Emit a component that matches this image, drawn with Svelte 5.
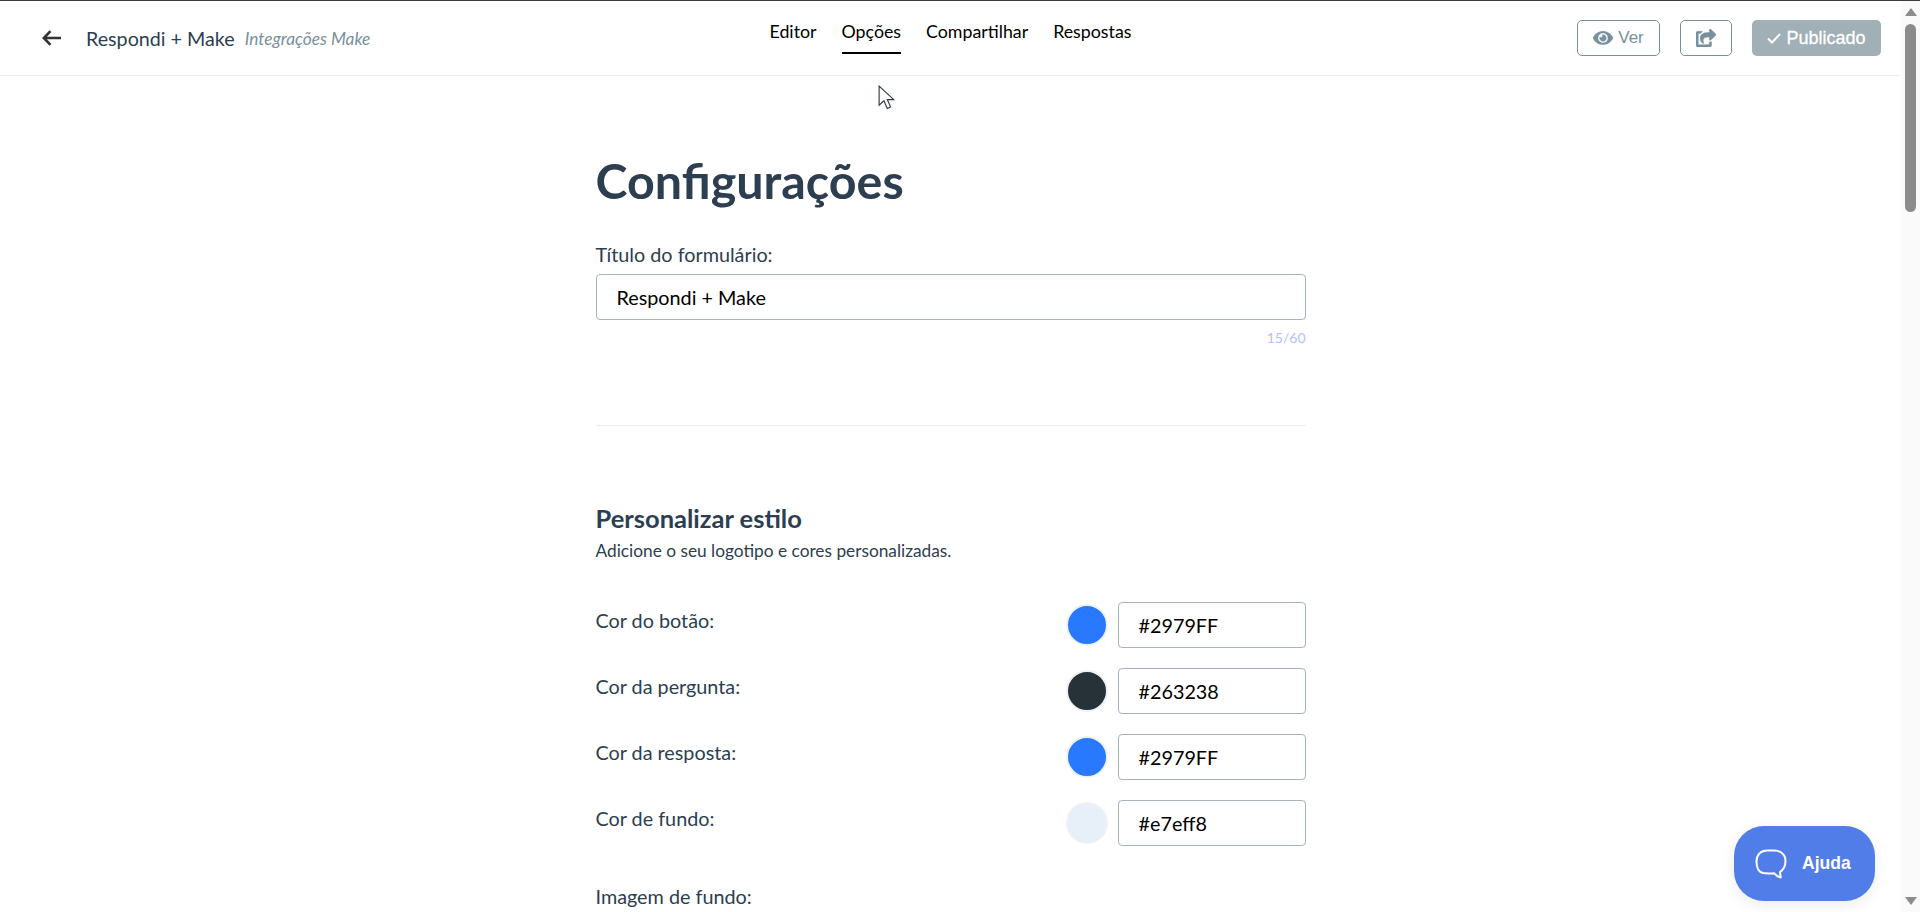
<script>
  const colors = [
    { label: 'Cor do botão:', value: '#2979FF', swatch: '#2979FF' },
    { label: 'Cor da pergunta:', value: '#263238', swatch: '#263238' },
    { label: 'Cor da resposta:', value: '#2979FF', swatch: '#2979FF' },
    { label: 'Cor de fundo:', value: '#e7eff8', swatch: '#e7eff8' }
  ];
  const tabs = ['Editor', 'Opções', 'Compartilhar', 'Respostas'];
</script>

<div class="shell">
  <div class="topline"></div>
  <div class="frame">
    <div class="page">
      <header>
        <div class="left">
          <svg class="back" viewBox="0 0 20 16" width="20" height="16" aria-hidden="true">
            <path d="M8.500 1.200 1.800 8l6.700 6.800M2 8h17" fill="none" stroke="#333" stroke-width="2.600"/>
          </svg>
          <span class="formname">Respondi + Make</span>
          <em class="folder">Integrações Make</em>
        </div>
        <nav>
          {#each tabs as tab}
            <span class="tab" class:active={tab === 'Opções'}>{tab}</span>
          {/each}
        </nav>
        <div class="actions">
          <button class="outline ver">
            <svg viewBox="0 0 576 512" width="20" height="18" aria-hidden="true"><path fill="#78909c" stroke="#78909c" stroke-width="10" d="M572.500 241.400C518.300 135.600 410.900 64 288 64S57.700 135.600 3.500 241.400a32.400 32.400 0 0 0 0 29.200C57.700 376.400 165.100 448 288 448s230.300-71.600 284.500-177.400a32.400 32.400 0 0 0 0-29.200zM288 400a144 144 0 1 1 144-144 143.900 143.900 0 0 1-144 144zm0-240a95.300 95.300 0 0 0-25.300 3.800 47.900 47.900 0 0 1-66.900 66.900A95.800 95.800 0 1 0 288 160z"/></svg>
            Ver
          </button>
          <button class="outline share" aria-label="Compartilhar">
            <svg viewBox="0 0 576 512" width="20" height="18" aria-hidden="true"><path fill="#78909c" stroke="#78909c" stroke-width="14" d="M568.482 177.448L424.479 313.433C409.3 327.768 384 317.14 384 295.985v-71.963c-144.575.97-205.566 35.113-164.775 171.353 4.483 14.973-12.846 26.567-25.006 17.33C155.252 383.105 120 326.488 120 269.339c0-143.937 117.599-172.5 264-173.312V24.012c0-21.174 25.317-31.768 40.479-17.448l144.003 136c10.02 9.463 10.028 25.425 0 34.884zM384 379.128V448H64V128h50.916a11.990 11.990 0 0 0 8.648-3.693c14.953-15.568 32.237-27.890 51.014-37.676C185.708 80.830 181.584 64 169.033 64H48C21.490 64 0 85.490 0 112v352c0 26.510 21.490 48 48 48h352c26.510 0 48-21.490 48-48v-88.806c0-8.288-8.197-14.066-16.011-11.302a71.830 71.830 0 0 1-34.189 3.377c-7.270-1.046-13.800 4.514-13.800 11.859z"/></svg>
          </button>
          <button class="published">
            <svg viewBox="0 0 14 11" width="14" height="11" aria-hidden="true"><path d="M1 5.500 5 9.500 13 1" fill="none" stroke="#fff" stroke-width="2"/></svg>
            Publicado
          </button>
        </div>
      </header>

      <main>
        <h1>Configurações</h1>
        <label class="field-label" for="title">Título do formulário:</label>
        <div class="input wide" id="title">Respondi + Make</div>
        <div class="count">15/60</div>
        <hr />
        <h2>Personalizar estilo</h2>
        <p class="sub">Adicione o seu logotipo e cores personalizadas.</p>
        <div class="rows">
          {#each colors as c}
            <div class="row">
              <span class="row-label">{c.label}</span>
              <span class="swatch" style="background:{c.swatch}"></span>
              <div class="input small">{c.value}</div>
            </div>
          {/each}
        </div>
        <div class="field-label bg">Imagem de fundo:</div>
      </main>

      <svg class="cursor" viewBox="0 0 16 24" width="18" height="27" aria-hidden="true">
        <path d="M1 1v17l4.300-4 2.900 6.800 3-1.300-2.900-6.500h5.700z" fill="#fff" stroke="#2b3a42" stroke-width="1"/>
      </svg>

      <button class="help">
        <svg viewBox="0 0 32 30" width="32" height="30" aria-hidden="true">
          <path d="M12 1.500h7c6.500 0 11.500 4 11.500 10.500 0 5.500-2.500 9-5.500 11l.7 5.500c-3-1-5-2.500-6.700-4.300-3.500.3-8 .3-11-.2C3.500 23 1.500 18 1.500 12.500 1.500 5.500 6 1.500 12 1.500z" fill="none" stroke="#fff" stroke-width="2" stroke-linejoin="round"/>
        </svg>
        <span>Ajuda</span>
      </button>
    </div>
    <div class="bar" aria-hidden="true">
      <i class="tri up"></i>
      <b class="thumb"></b>
      <i class="tri down"></i>
    </div>
  </div>
</div>

<style>
  :global(body) { margin: 0; background: #fff; overflow: hidden; }
  .shell { height: 912px; display: flex; flex-direction: column; font-family: Lato, sans-serif; }
  .topline { height: 1px; background: #3c3c3c; flex: none; }
  .frame { flex: 1; display: flex; min-height: 0; }
  .page { flex: 1; min-width: 0; position: relative; overflow: hidden; background: #fff; }
  header {
    height: 75px; box-sizing: border-box; border-bottom: 1px solid #eceff1;
    display: grid; grid-template-columns: 1fr auto 1fr; align-items: center;
  }
  .left { display: flex; align-items: center; padding-left: 42px; }
  .back { margin-right: 24px; }
  .formname { font-size: 19.700px; color: #2c3e50; }
  .folder { font-size: 17.300px; color: #78909c; margin-left: 10px; }
  nav { display: flex; gap: 25px; align-self: flex-start; }
  .tab { font-size: 17.800px; color: #000; height: 36px; margin-top: 15px; line-height: 30px; }
  .tab.active { border-bottom: 2px solid #000; }
  .actions { display: flex; justify-content: flex-end; align-items: center; gap: 20px; padding-right: 20px; }
  button { font-family: "Liberation Sans", Arial, sans-serif; }
  .outline {
    height: 36px; box-sizing: border-box; background: #fff; border: 1px solid #78909c; border-radius: 5px;
    color: #78909c; font-size: 17px; display: flex; align-items: center; justify-content: center; gap: 5px; padding: 0;
  }
  .ver { width: 83px; }
  .share { width: 52px; }
  .published {
    width: 129px; height: 36px; background: #a1afb7; border: 0; border-radius: 5px; color: #fff;
    font-size: 18px; font-weight: 400; display: flex; align-items: center; justify-content: center; gap: 5px; padding: 0;
    -webkit-text-stroke: .3px #fff;
  }
  main { width: 710px; margin: 0 auto; color: #2c3e50; }
  h1 { font-size: 48.400px; line-height: 58px; font-weight: 700; margin: 75px 0 0; color: #2c3e50; }
  .field-label { display: block; font-size: 19.800px; line-height: 24px; margin-top: 33px; color: #2c3e50; }
  .input {
    box-sizing: border-box; height: 46px; border: 1px solid #a5b5bd; border-radius: 4px; background: #fff;
    padding-left: 20px; font-size: 19.800px; line-height: 44px; color: #000;
  }
  .wide { margin-top: 8px; }
  .count { text-align: right; font-size: 14px; line-height: 18px; color: #b3c0ff; margin-top: 9px; }
  hr { border: 0; border-top: 1px solid #eceff1; margin: 78px 0 0; }
  h2 { font-size: 25.500px; line-height: 30px; font-weight: 700; margin: 77px 0 0; color: #2c3e50; }
  .sub { font-size: 17.300px; line-height: 22px; margin: 7px 0 0; }
  .rows { margin-top: 40px; display: flex; flex-direction: column; gap: 20px; }
  .row { display: flex; align-items: center; height: 46px; }
  .row-label { flex: 1; font-size: 19.800px; margin-top: -10px; }
  .swatch { width: 38px; height: 38px; border-radius: 50%; border: 2px solid #eef1f5; margin-right: 10px; }
  .small { width: 188px; }
  .bg { margin-top: 38px; }
  .cursor { position: absolute; left: 878px; top: 84px; }
  .help {
    position: absolute; left: 1734px; top: 825px; width: 141px; height: 75px; border: 0; border-radius: 30px;
    background: #517de9; color: #fff; font-size: 17.500px; font-weight: 700; display: flex; align-items: center;
    gap: 15px; padding: 0 0 0 21px; box-shadow: 0 4px 14px rgba(0,0,0,.08);
  }
  .bar { width: 19px; flex: none; background: #fafafa; display: flex; flex-direction: column; align-items: center; position: relative; }
  .tri { width: 0; height: 0; border-left: 6px solid transparent; border-right: 6px solid transparent; flex: none; }
  .up { border-bottom: 8px solid #8c8c8c; margin-top: 7px; }
  .down { border-top: 8px solid #8c8c8c; margin-top: auto; margin-bottom: 7px; }
  .thumb { width: 11px; height: 188px; background: #8c8c8c; border-radius: 6px; margin-top: 8px; }
</style>
